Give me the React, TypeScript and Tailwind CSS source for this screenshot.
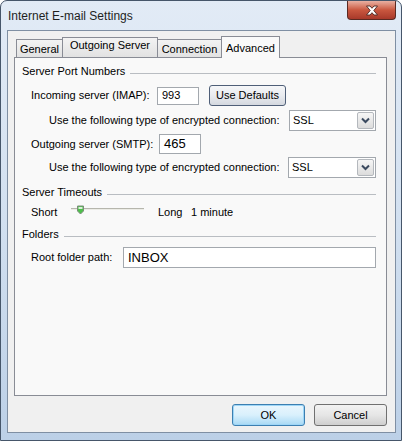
import React from 'react';

const Header = ({ label, className = '' }: { label: string; className?: string }) => (
  <div className={`w-full flex items-center h-[15px] ${className}`}>
    <span className="leading-[15px] whitespace-nowrap">{label}</span>
    <div className="flex-1 min-w-0 h-px bg-[#b9bdc2] ml-[5px] mt-[3px]" />
  </div>
);

const Select = ({ className = '' }: { className?: string }) => (
  <div
    className={`ml-auto shrink-0 h-[21px] border border-[#a3a8ae] bg-white flex items-center justify-between pl-[3px] pr-[1px] ${className}`}
  >
    <span>SSL</span>
    <div className="w-[17px] h-[17px] border border-[#b4b8bd] rounded-[2px] bg-gradient-to-b from-[#f6f6f6] to-[#dcdcdc] flex items-center justify-center">
      <svg width="9" height="7" viewBox="0 0 9 7">
        <path d="M1 1.5 L4.5 5 L8 1.5" fill="none" stroke="#3b4a5f" strokeWidth="2" />
      </svg>
    </div>
  </div>
);

const Tab = ({
  label,
  className = '',
  textClass = '',
}: {
  label: string;
  className?: string;
  textClass?: string;
}) => (
  <div
    className={`h-[18px] border border-b-0 border-[#898c95] bg-gradient-to-b from-[#f3f3f3] to-[#e2e2e2] flex justify-center ${className}`}
  >
    <span className={`leading-[16px] whitespace-nowrap ${textClass}`}>{label}</span>
  </div>
);

const CloseButton = () => (
  <div className="mr-[5px] w-[49px] h-[19px] rounded-b-[4px] border border-t-0 border-[#5a2a22] bg-gradient-to-b from-[#e8b0a2] via-[#c9573f] to-[#a8392a] flex items-center justify-center">
    <svg width="14" height="11" viewBox="0 0 14 11">
      <path
        d="M1.5 1 H5 L7 3.3 L9 1 H12.5 L8.8 5.5 L12.5 10 H9 L7 7.7 L5 10 H1.5 L5.2 5.5 Z"
        fill="#ffffff"
        stroke="#4a2620"
        strokeWidth="0.9"
        strokeLinejoin="round"
      />
    </svg>
  </div>
);

export default function App() {
  return (
    <div className="w-[402px] h-[441px] rounded-t-[7px] border border-[#46566a] bg-gradient-to-b from-[#e2ebf6] via-[#d2e0f0] to-[#bcd0e7] flex flex-col overflow-hidden text-[11px] text-black font-['Liberation_Sans',Arial,sans-serif]">
      <div className="h-[29px] flex items-start justify-between">
        <span className="text-[12px] ml-[7px] mt-[6px] text-[#1e1e1e]">Internet E-mail Settings</span>
        <CloseButton />
      </div>

      <div className="ml-[6px] mr-[5px] h-[403px] border border-[#7f8fa3] bg-[#f0f0f0] flex flex-col">
        <div className="h-[26px] ml-[8px] flex items-end">
          <Tab label="General" className="w-[47px]" textClass="pt-[1px]" />
          <Tab label="Outgoing Server" className="w-[96px] -ml-px h-[20px]" textClass="-mt-[1px]" />
          <Tab label="Connection" className="w-[65px] -ml-px" textClass="pt-[1px]" />
          <div className="w-[59px] -ml-px h-[22px] -mb-px relative z-10 border border-b-0 border-[#898c95] bg-[#f9f9f9] flex justify-center">
            <span className="leading-[20px] pt-[1px]">Advanced</span>
          </div>
        </div>

        <div className="ml-[6px] mr-[8px] h-[339px] border border-[#898c95] bg-[#f9f9f9] pl-[7px] pr-[10px] flex flex-col overflow-hidden">
          <Header label="Server Port Numbers" className="mt-[6px]" />

          <div className="mt-[6px] h-[21px] flex items-center">
            <span className="ml-[9px] w-[126px] shrink-0">Incoming server (IMAP):</span>
            <div className="w-[42px] h-[18px] border border-[#a3a8ae] bg-white flex items-center pl-[4px]">993</div>
            <button className="ml-[10px] w-[77px] h-[21px] rounded-[3px] border border-[#4f5f78] bg-gradient-to-b from-[#f6f7f9] via-[#e9ebef] to-[#d4d8df]">
              Use Defaults
            </button>
          </div>

          <div className="mt-[4px] h-[21px] flex items-center">
            <span className="ml-[27px] whitespace-nowrap">Use the following type of encrypted connection:</span>
            <Select className="w-[87px]" />
          </div>

          <div className="mt-[3px] h-[20px] flex items-center">
            <span className="ml-[9px] w-[128px] shrink-0">Outgoing server (SMTP):</span>
            <div className="w-[42px] h-[20px] border border-[#a3a8ae] bg-white flex items-center pl-[4px] text-[13px]">465</div>
          </div>

          <div className="mt-[3px] h-[21px] flex items-center">
            <span className="ml-[27px] whitespace-nowrap">Use the following type of encrypted connection:</span>
            <Select className="w-[88px]" />
          </div>

          <Header label="Server Timeouts" className="mt-[7px]" />

          <div className="mt-[5px] h-[15px] flex items-center">
            <span className="ml-[9px] w-[40px] shrink-0">Short</span>
            <div className="w-[73px] h-[15px] relative shrink-0">
              <div className="absolute left-0 right-0 top-[3px] h-[2px] bg-[#b6b6ad] border-b border-[#ecece6]" />
              <svg className="absolute left-[6px] top-0" width="7" height="10" viewBox="0 0 7 10">
                <path d="M0.5 1 H6.5 V6 L3.5 9 L0.5 6 Z" fill="#4cc04a" stroke="#7c8c7a" strokeWidth="1" />
                <path d="M1.5 2 H5.5 V4 H1.5 Z" fill="#d9f0d6" />
              </svg>
            </div>
            <span className="ml-[14px] w-[33px] shrink-0">Long</span>
            <span>1 minute</span>
          </div>

          <Header label="Folders" className="mt-[7px]" />

          <div className="mt-[5px] h-[21px] flex items-center">
            <span className="ml-[9px] w-[92px] shrink-0 whitespace-nowrap">Root folder path:</span>
            <div className="flex-1 h-[21px] border border-[#a3a8ae] bg-white flex items-center pl-[4px] text-[13px]">INBOX</div>
          </div>
        </div>

        <div className="mt-[8px] flex justify-end mr-[8px] gap-[9px]">
          <button className="w-[73px] h-[22px] rounded-[3px] border border-[#3c7fb1] bg-gradient-to-b from-[#eaf6fd] via-[#d9f0fc] to-[#a7d9f5] shadow-[inset_0_0_0_1px_#9ed6f7]">
            OK
          </button>
          <button className="w-[73px] h-[22px] rounded-[3px] border border-[#707070] bg-gradient-to-b from-[#f2f2f2] via-[#e6e6e6] to-[#cfcfcf]">
            Cancel
          </button>
        </div>
      </div>
    </div>
  );
}
